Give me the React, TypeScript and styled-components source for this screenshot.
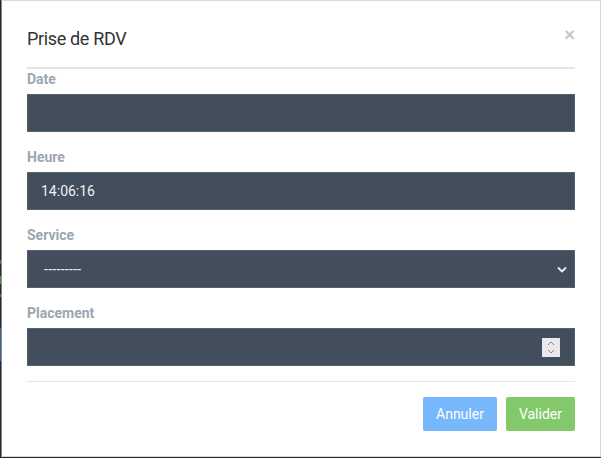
import React from "react";
import styled, { createGlobalStyle } from "styled-components";

const Global = createGlobalStyle`
  html, body { margin: 0; padding: 0; background: #1e282c; }
  * { box-sizing: border-box; }
`;

const Backdrop = styled.div`
  width: 601px;
  height: 458px;
  background: #1e282c;
  display: flex;
  padding-left: 1px;
  position: relative;
  overflow: hidden;
`;

const SideStripe = styled.div<{ $top: number; $h: number; $c: string }>`
  position: absolute;
  left: 0;
  width: 1px;
  top: ${(p) => p.$top}px;
  height: ${(p) => p.$h}px;
  background: ${(p) => p.$c};
`;

const Modal = styled.div`
  width: 600px;
  height: 457px;
  background: #fff;
  border: 1px solid #d9d9d9;
  border-left-color: #8a8a8a;
  display: flex;
  flex-direction: column;
  padding: 0 25px;
`;

const Header = styled.div`
  height: 68px;
  border-bottom: 2px solid #e5e5e5;
  display: flex;
  align-items: flex-start;
  justify-content: space-between;
`;

const Title = styled.h4`
  margin: 29px 0 0;
  font-family: Roboto, "Noto Sans", sans-serif;
  font-weight: 400;
  font-size: 18px;
  line-height: 18px;
  letter-spacing: -0.35px;
  color: #333;
`;

const Close = styled.span`
  margin-top: 24px;
  font-family: "Liberation Sans", Arial, sans-serif;
  font-size: 19px;
  font-weight: 700;
  color: #c8c8c8;
  margin-right: 0px;
  line-height: 1;
`;

const Body = styled.div`
  display: flex;
  flex-direction: column;
`;

const Group = styled.div`
  display: flex;
  flex-direction: column;
  margin-bottom: 15px;
`;

const Label = styled.label`
  font-family: Roboto, "Noto Sans", sans-serif;
  font-weight: 700;
  font-size: 14px;
  line-height: 20px;
  color: #9ba6af;
  margin-bottom: 5px;
`;

const Field = styled.div<{ $padRight?: number }>`
  height: 38px;
  background: #434e5c;
  border: 1px solid #56616e;
  display: flex;
  align-items: center;
  justify-content: space-between;
  padding: 0 ${(p) => p.$padRight ?? 13}px 0 13px;
  font-family: Roboto, "Noto Sans", sans-serif;
  font-size: 14px;
  color: #f0f0f0;
`;

const SelectText = styled.span`
  padding-left: 3px;
  letter-spacing: 0.3px;
`;

const Spinner = styled.div`
  width: 18px;
  height: 19px;
  background: #e9e9ed;
  margin-right: 1px;
  display: flex;
  align-items: center;
  justify-content: center;
`;

const Divider = styled.div`
  height: 1px;
  background: #e5e5e5;
  margin-top: 0px;
`;

const Footer = styled.div`
  display: flex;
  justify-content: flex-end;
  gap: 9px;
  padding-top: 15px;
`;

const Button = styled.button<{ $bg: string }>`
  height: 34px;
  border: none;
  border-radius: 2px;
  background: ${(p) => p.$bg};
  color: #fff;
  font-family: Roboto, "Noto Sans", sans-serif;
  font-size: 14px;
  padding: 0 13px;
`;

export default function App() {
  return (
    <>
      <Global />
      <Backdrop>
        <SideStripe $top={260} $h={4} $c="#4e7a3c" />
        <SideStripe $top={276} $h={8} $c="#5b8f44" />
        <SideStripe $top={294} $h={3} $c="#4e7a3c" />
        <SideStripe $top={328} $h={33} $c="#3c6496" />
        <Modal>
          <Header>
            <Title>Prise de RDV</Title>
            <Close>×</Close>
          </Header>
          <Body>
            <Group>
              <Label>Date</Label>
              <Field />
            </Group>
            <Group>
              <Label>Heure</Label>
              <Field>14:06:16</Field>
            </Group>
            <Group>
              <Label>Service</Label>
              <Field $padRight={7}>
                <SelectText>---------</SelectText>
                <svg width="10" height="7" viewBox="0 0 10 7">
                  <path d="M1 1.5 L5 5.5 L9 1.5" stroke="#f0f0f0" strokeWidth="1.8" fill="none" />
                </svg>
              </Field>
            </Group>
            <Group>
              <Label>Placement</Label>
              <Field>
                <span />
                <Spinner>
                  <svg width="10" height="15" viewBox="0 0 10 15">
                    <path d="M2 5 L5 2 L8 5" stroke="#8b8b94" strokeWidth="1" fill="none" />
                    <path d="M2 10 L5 13 L8 10" stroke="#8b8b94" strokeWidth="1" fill="none" />
                  </svg>
                </Spinner>
              </Field>
            </Group>
            <Divider />
            <Footer>
              <Button $bg="#77b7fc">Annuler</Button>
              <Button $bg="#83c96b">Valider</Button>
            </Footer>
          </Body>
        </Modal>
      </Backdrop>
    </>
  );
}
